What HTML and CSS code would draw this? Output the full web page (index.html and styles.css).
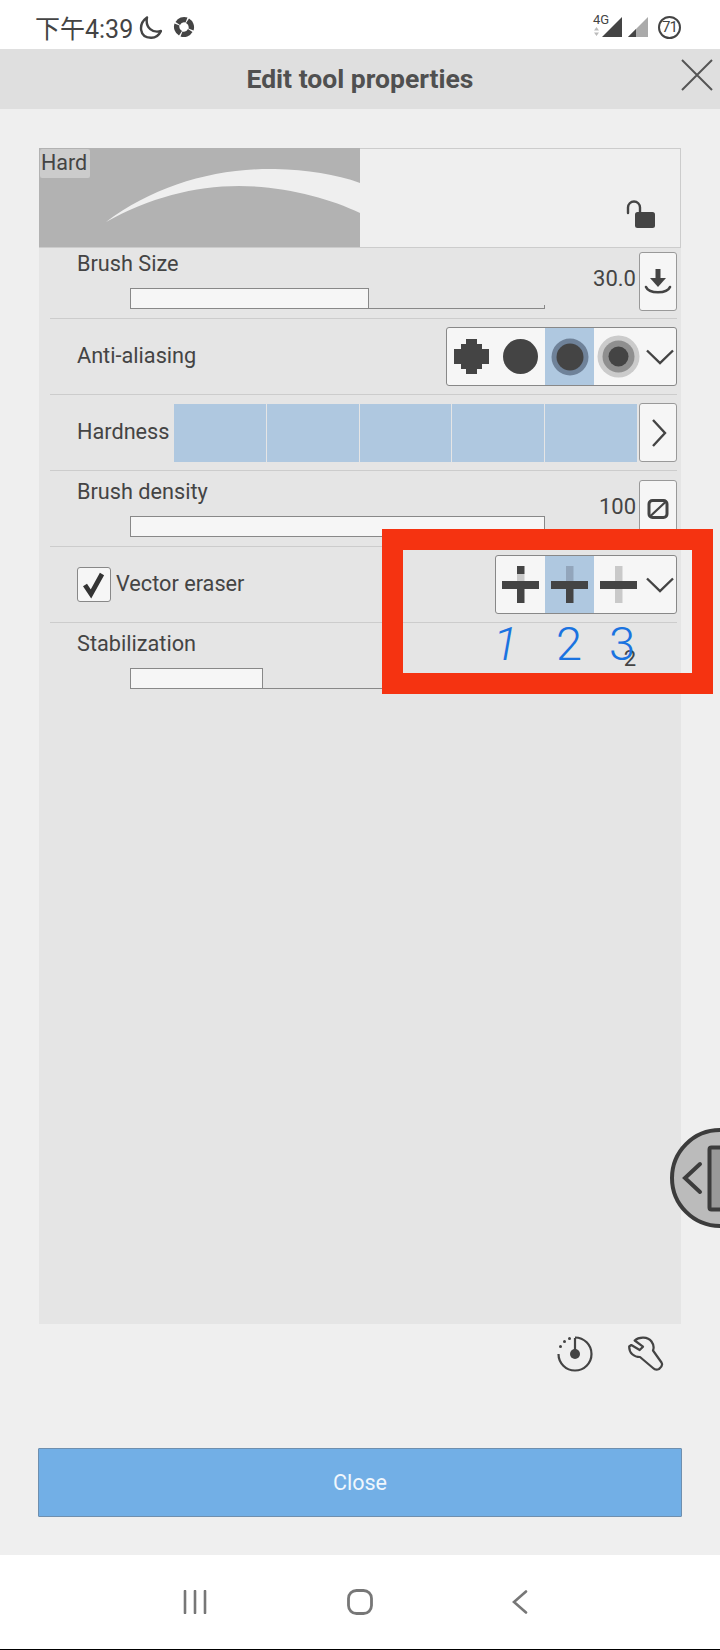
FILE: index.html
```html
<!DOCTYPE html>
<html>
<head>
  <title>Edit tool properties</title>
  <meta name="viewport" content="width=device-width, initial-scale=1.0">
  <link rel="stylesheet" href="styles.css">
</head>
<body>
  <div class="page">
    <!-- Android status bar -->
    <div class="status-bar">
      <div class="status-left">
        <span class="clock">下午4:39</span>
        <svg width="23" height="23" viewBox="0 0 23 23"><path d="M8 1.500C-1 8 0 22 12.500 21.800C16.500 21.800 19.800 19.500 22 15C14 17.500 6 12 8 1.500Z" fill="none" stroke="#444" stroke-width="2.400" stroke-linejoin="round"/></svg>
        <svg class="status-sync" width="22" height="22" viewBox="0 0 22 22"><g fill="#444"><path d="M2.500 6A10 10 0 0 1 14.500 1.500L12.500 6.500A4.800 4.800 0 0 0 7 9Z"/><path d="M2.500 6A10 10 0 0 1 14.500 1.500L12.500 6.500A4.800 4.800 0 0 0 7 9Z" transform="rotate(90 11 11)"/><path d="M2.500 6A10 10 0 0 1 14.500 1.500L12.500 6.500A4.800 4.800 0 0 0 7 9Z" transform="rotate(180 11 11)"/><path d="M2.500 6A10 10 0 0 1 14.500 1.500L12.500 6.500A4.800 4.800 0 0 0 7 9Z" transform="rotate(270 11 11)"/></g></svg>
      </div>
      <div class="status-right">
        <span class="net-label">4G</span>
        <svg class="net-arrows" width="5" height="9" viewBox="0 0 5 9"><path d="M2.500 0L5 3.500H0ZM2.500 9L0 5.500H5Z" fill="#bbb"/></svg>
        <svg width="20" height="20" viewBox="0 0 20 20"><path d="M0 20L20 0V20Z" fill="#444"/></svg>
        <svg width="20" height="20" viewBox="0 0 20 20"><path d="M0 20L20 0V20Z" fill="#aaa"/><path d="M0 20L8 12V20Z" fill="#444"/></svg>
        <span class="battery">71</span>
      </div>
    </div>

    <div class="title-bar">
      <span class="title">Edit tool properties</span>
      <svg class="close-x" width="32" height="32" viewBox="0 0 32 32"><path d="M1 1L31 31M31 1L1 31" stroke="#555" stroke-width="2" fill="none"/></svg>
    </div>

    <div class="main">
      <div class="panel">
        <div class="preview">
          <div class="preview-art">
            <span class="preview-name">Hard</span>
            <svg width="321" height="99" viewBox="0 0 321 99"><path d="M67 74C115 38 175 20 236 21C268 22 297 26 321 35V65C290 50 245 38 200 38C155 38 110 50 67 74Z" fill="#efefef"/></svg>
          </div>
          <svg class="lock" width="30" height="30" viewBox="0 0 30 30"><path d="M2 13V7.500A6 6 0 0 1 14 7.500V12" fill="none" stroke="#444" stroke-width="2.400" stroke-linecap="round"/><rect x="9" y="12" width="20" height="16" rx="2.500" fill="#444"/></svg>
        </div>

        <div class="row slider-row first-row">
          <div class="row-main">
            <div class="label">Brush Size</div>
            <div class="track"><div class="fill" style="width: 239px"></div></div>
          </div>
          <div class="value">30.0</div>
          <div class="side-btn">
            <svg width="38" height="59" viewBox="0 0 38 59"><path d="M19 17V30" stroke="#444" stroke-width="5" fill="none"/><path d="M11 26H27L19 35Z" fill="#444"/><path d="M7 35C10 42 28 42 31 35" fill="none" stroke="#444" stroke-width="2.600" stroke-linecap="round"/></svg>
          </div>
        </div>

        <div class="row option-row">
          <div class="label">Anti-aliasing</div>
          <div class="segments">
            <div class="seg">
              <svg width="35" height="35" viewBox="0 0 35 35"><path d="M12 0H23V5H28V10H35V25H28V30H23V35H12V30H7V25H0V10H7V5H12Z" fill="#444"/></svg>
            </div>
            <div class="seg">
              <svg width="35" height="35" viewBox="0 0 35 35"><circle cx="17.500" cy="17.500" r="17.500" fill="#444"/></svg>
            </div>
            <div class="seg seg-on">
              <svg width="38" height="38" viewBox="0 0 38 38"><circle cx="19" cy="19" r="18.500" fill="#6f8299"/><circle cx="19" cy="19" r="13.500" fill="#444"/></svg>
            </div>
            <div class="seg">
              <svg width="43" height="43" viewBox="0 0 43 43"><circle cx="21.500" cy="21.500" r="21" fill="#cbcbcb"/><circle cx="21.500" cy="21.500" r="16" fill="#8f8f8f"/><circle cx="21.500" cy="21.500" r="10" fill="#444"/></svg>
            </div>
            <div class="seg-more">
              <svg width="28" height="16" viewBox="0 0 28 16"><path d="M1 1.500L14 14L27 1.500" fill="none" stroke="#444" stroke-width="2.400"/></svg>
            </div>
          </div>
        </div>

        <div class="row hardness-row">
          <div class="label">Hardness</div>
          <div class="cells">
            <div class="cell"></div>
            <div class="cell"></div>
            <div class="cell"></div>
            <div class="cell"></div>
            <div class="cell"></div>
          </div>
          <div class="side-btn">
            <svg width="38" height="59" viewBox="0 0 38 59"><path d="M14 17L26 30L14 43" fill="none" stroke="#444" stroke-width="2.400"/></svg>
          </div>
        </div>

        <div class="row slider-row">
          <div class="row-main">
            <div class="label">Brush density</div>
            <div class="track"><div class="fill" style="width: 100%"></div></div>
          </div>
          <div class="value">100</div>
          <div class="side-btn">
            <svg width="38" height="59" viewBox="0 0 38 59"><rect x="10" y="20.500" width="18" height="17" rx="3.500" fill="none" stroke="#444" stroke-width="3"/><path d="M11 36.500L27 21.500" stroke="#444" stroke-width="2.200"/></svg>
          </div>
        </div>

        <div class="row option-row">
          <div class="check-wrap">
            <div class="checkbox">
              <svg width="34" height="34" viewBox="0 0 34 34"><path d="M8 18L14 27L25 7" fill="none" stroke="#333" stroke-width="4.800"/></svg>
            </div>
            <div class="label">Vector eraser</div>
          </div>
          <div class="segments">
            <div class="seg">
              <svg width="37" height="37" viewBox="0 0 37 37"><rect x="15" y="0" width="7.500" height="8" fill="#444"/><rect x="15" y="8" width="7.500" height="7" fill="#c9c9c9"/><rect x="15" y="15" width="7.500" height="22" fill="#444"/><rect x="0" y="15" width="37" height="8" fill="#444"/></svg>
            </div>
            <div class="seg seg-on">
              <svg width="37" height="37" viewBox="0 0 37 37"><rect x="15" y="0" width="7.500" height="15" fill="#92a5bb"/><rect x="15" y="15" width="7.500" height="22" fill="#444"/><rect x="0" y="15" width="37" height="8" fill="#444"/></svg>
            </div>
            <div class="seg">
              <svg width="37" height="37" viewBox="0 0 37 37"><rect x="15" y="0" width="7.500" height="37" fill="#c9c9c9"/><rect x="0" y="15" width="37" height="8" fill="#444"/></svg>
            </div>
            <div class="seg-more">
              <svg width="28" height="16" viewBox="0 0 28 16"><path d="M1 1.500L14 14L27 1.500" fill="none" stroke="#444" stroke-width="2.400"/></svg>
            </div>
          </div>
        </div>

        <div class="row slider-row last-row">
          <div class="row-main">
            <div class="label">Stabilization</div>
            <div class="track"><div class="fill" style="width: 133px"></div></div>
          </div>
          <div class="value">2</div>
          <div class="side-gap"></div>
        </div>
      </div>

      <div class="tools">
        <svg width="36" height="36" viewBox="0 0 36 36"><path d="M18 1.500A16.500 16.500 0 1 1 1.500 18" fill="none" stroke="#444" stroke-width="2.200"/><path d="M18 2V18" stroke="#444" stroke-width="2.200"/><circle cx="18" cy="18" r="5" fill="#444"/><circle cx="3.500" cy="10.500" r="1.500" fill="#444"/><circle cx="7.500" cy="5.500" r="1.500" fill="#444"/><circle cx="12.500" cy="2.500" r="1.500" fill="#444"/></svg>
        <svg width="36" height="36" viewBox="0 0 36 36"><path d="M15 10.700L6.700 4.500C11 0.500 20 0.500 23.500 5.500C26 9 26 12 25 14.500L33.500 26.500C35 29 33 31.500 31 33C29 34 27 34 25 32L12 21C6 21 1 17 1.200 10.500L3.300 9L11.700 14Z" fill="none" stroke="#444" stroke-width="2.200" stroke-linejoin="round"/></svg>
      </div>

      <div class="close-btn">Close</div>
    </div>

    <div class="nav-bar">
      <svg width="24" height="24" viewBox="0 0 24 24"><path d="M2 1V23M12 1V23M22 1V23" stroke="#777" stroke-width="2.600" stroke-linecap="round" fill="none"/></svg>
      <svg width="26" height="26" viewBox="0 0 26 26"><rect x="1.500" y="1.500" width="23" height="23" rx="8" fill="none" stroke="#777" stroke-width="2.800"/></svg>
      <svg width="16" height="24" viewBox="0 0 16 24"><path d="M14 1.500L2 12L14 22.500" stroke="#777" stroke-width="2.600" stroke-linecap="round" fill="none"/></svg>
    </div>

    <!-- red box and digits someone painted over the screenshot -->
    <div class="callout">
      <span class="digit digit-1">1</span>
      <span class="digit digit-2">2</span>
      <span class="digit digit-3">3</span>
    </div>

    <!-- floating side tab -->
    <svg class="side-tab" width="50" height="100" viewBox="0 0 50 100"><circle cx="50" cy="50" r="48" fill="#bbb" stroke="#3c3c3c" stroke-width="4"/><path d="M30 36L15 50L30 64" fill="none" stroke="#3c3c3c" stroke-width="4" stroke-linecap="round"/><rect x="39.500" y="19.500" width="20" height="62" rx="2" fill="#999" stroke="#3c3c3c" stroke-width="4"/></svg>
  </div>
</body>
</html>
```

FILE: styles.css
```css
* {
  box-sizing: border-box;
}
body {
  margin: 0;
  font-family: Roboto, "Noto Sans CJK SC", sans-serif;
  color: #444;
}
svg {
  display: block;
}
.page {
  position: relative;
  width: 720px;
  height: 1650px;
  overflow: hidden;
  display: flex;
  flex-direction: column;
  background-color: #efefef;
}

/* status bar */
.status-bar {
  height: 49px;
  background-color: #fff;
  display: flex;
  justify-content: space-between;
  align-items: center;
  padding: 8px 39px 3px 35px;
}
.status-left {
  display: flex;
  align-items: center;
}
.clock {
  font-size: 25px;
  margin-right: 6px;
}
.status-sync {
  margin-left: 11px;
}
.status-right {
  position: relative;
  display: flex;
  align-items: center;
  gap: 6px;
}
.net-label {
  position: absolute;
  left: -9px;
  top: -3px;
  font-size: 13px;
  line-height: 13px;
}
.net-arrows {
  position: absolute;
  left: -8px;
  top: 11px;
}
.battery {
  width: 23px;
  height: 23px;
  margin-left: 4px;
  border: 2.5px solid #444;
  border-radius: 50%;
  font-size: 15px;
  line-height: 18px;
  text-align: center;
  letter-spacing: -1px;
}

/* title */
.title-bar {
  position: relative;
  height: 60px;
  background-color: #dfdfdf;
  text-align: center;
  line-height: 60px;
}
.title {
  font-size: 26.5px;
  font-weight: bold;
  color: #505050;
}
.close-x {
  position: absolute;
  right: 7px;
  top: 10px;
}

/* main panel */
.main {
  flex: 1;
  display: flex;
  flex-direction: column;
  padding: 39px 39px 38px 39px;
}
.panel {
  flex: 1;
  background-color: #e5e5e5;
}
.preview {
  height: 100px;
  display: flex;
  justify-content: space-between;
  align-items: flex-end;
  background-color: #efefef;
  border: 1px solid #ccc;
  border-left: none;
}
.preview-art {
  position: relative;
  width: 321px;
  height: 99px;
  background-color: #b2b2b2;
}
.preview-name {
  position: absolute;
  left: 1px;
  top: 1px;
  height: 29px;
  padding: 0 3px 0 1px;
  background-color: #ccc;
  border-radius: 2px;
  font-size: 21.5px;
  line-height: 27px;
}
.lock {
  margin: 0 24px 17px 0;
}

.row {
  display: flex;
  margin: 0 4px 0 11px;
  padding-left: 27px;
  border-bottom: 1px solid #ccc;
}
.label {
  font-size: 21.7px;
  line-height: 24px;
}
.slider-row {
  height: 76px;
  align-items: flex-start;
  padding-top: 9px;
}
.first-row {
  height: 71px;
  padding-top: 4px;
}
.last-row {
  border-bottom: none;
}
.row-main {
  width: 467px;
}
.track {
  position: relative;
  height: 21px;
  margin: 12px 0 0 53px;
  width: 415px;
  border-bottom: 1px solid #888;
}
.track::after {
  content: "";
  position: absolute;
  right: 0;
  bottom: 0;
  width: 1px;
  height: 3px;
  background-color: #888;
}
.fill {
  height: 21px;
  background-color: #f6f6f6;
  border: 1px solid #888;
}
.value {
  flex: 1;
  text-align: right;
  font-size: 22px;
  line-height: 24px;
  margin-top: 15px;
  padding-right: 3px;
}
.side-btn {
  flex: none;
  width: 38px;
  height: 59px;
  background-color: #f6f6f6;
  border: 1px solid #999;
  border-radius: 3px;
  display: flex;
  justify-content: center;
  align-items: center;
}
.side-btn svg {
  margin: -1px;
}
.side-gap {
  width: 38px;
}
.option-row {
  height: 76px;
  align-items: center;
  justify-content: space-between;
}
.option-row .label {
  margin-top: -2px;
}
.segments {
  display: flex;
  height: 59px;
  background-color: #f6f6f6;
  border: 1px solid #888;
  border-radius: 3px;
}
.seg {
  width: 49px;
  display: flex;
  justify-content: center;
  align-items: center;
}
.seg-on {
  background-color: #afc8e0;
}
.seg-more {
  width: 33px;
  display: flex;
  justify-content: center;
  align-items: center;
}
.hardness-row {
  height: 76px;
  align-items: center;
  gap: 2px;
}
.hardness-row .label {
  width: 95px;
  flex: none;
  margin-top: -2px;
}
.cells {
  flex: 1;
  height: 58px;
  display: flex;
  gap: 1px;
}
.cell {
  flex: 1;
  background-color: #afc8e0;
}
.check-wrap {
  display: flex;
  align-items: center;
  gap: 5px;
}
.checkbox {
  width: 34px;
  height: 35px;
  background-color: #f6f6f6;
  border: 1px solid #888;
  border-radius: 3px;
}
.checkbox svg {
  margin: -1px;
}

/* icons under the panel */
.tools {
  height: 124px;
  display: flex;
  justify-content: flex-end;
  gap: 35px;
  padding: 12px 17px 0 0;
}
.close-btn {
  height: 69px;
  margin: 0 -1px;
  background-color: #72afe6;
  border: 1px solid #6f8fae;
  border-radius: 1px;
  color: #f0f7fd;
  font-size: 21.5px;
  line-height: 68px;
  text-align: center;
}

/* navigation bar */
.nav-bar {
  height: 95px;
  background-color: #fff;
  border-bottom: 1px solid #000;
  display: flex;
  align-items: center;
  padding: 0 192px 0 183px;
  justify-content: space-between;
}

/* overlays */
.callout {
  position: absolute;
  left: 382px;
  top: 529px;
  width: 331px;
  height: 165px;
  border: solid #f53311;
  border-width: 21px;
}
.digit {
  position: absolute;
  top: 71px;
  font-size: 47px;
  font-weight: 300;
  line-height: 46px;
  color: #1a73e0;
}
.digit-1 {
  left: 90px;
  font-style: italic;
}
.digit-2 {
  left: 153px;
}
.digit-3 {
  left: 206px;
}
.side-tab {
  position: absolute;
  left: 670px;
  top: 1128px;
}
```
